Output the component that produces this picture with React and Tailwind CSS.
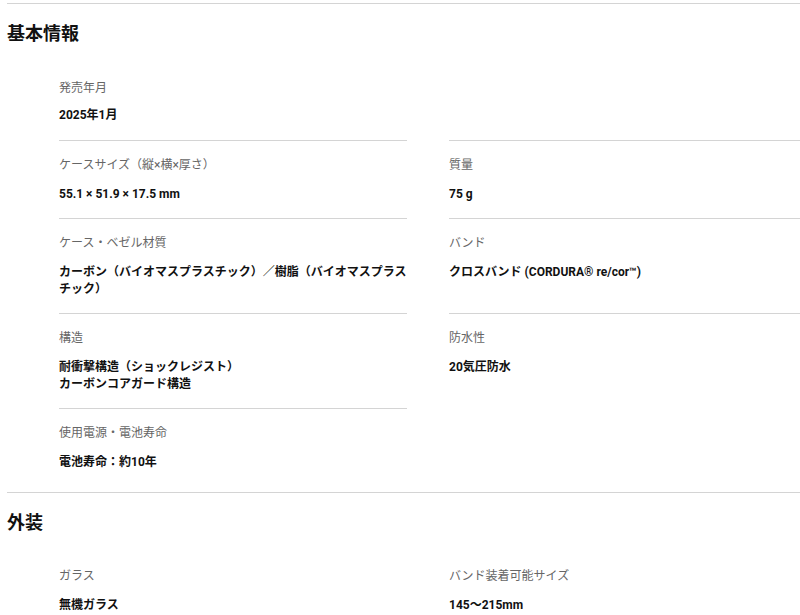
const basic = {
  first: { label: '発売年月', value: ['2025年1月'] },
  items: [
    { label: 'ケースサイズ（縦×横×厚さ）', value: ['55.1 × 51.9 × 17.5 mm'] },
    { label: '質量', value: ['75 g'] },
    { label: 'ケース・ベゼル材質', value: ['カーボン（バイオマスプラスチック）／樹脂（バイオマスプラスチック）'] },
    { label: 'バンド', value: ['クロスバンド (CORDURA® re/cor™)'] },
    { label: '構造', value: ['耐衝撃構造（ショックレジスト）', 'カーボンコアガード構造'] },
    { label: '防水性', value: ['20気圧防水'] },
    { label: '使用電源・電池寿命', value: ['電池寿命：約10年'] },
  ],
}

function Spec({ label, value, border = true, first = false }) {
  return (
    <div className={`${border ? 'border-t border-[#d4d4d4]' : ''} pt-[16px] ${first ? 'pb-[16px]' : 'pb-[15px]'}`}>
      <div className="text-[12px] leading-[17px] text-[#666]">{label}</div>
      <div className={`${first ? 'mt-[10px]' : 'mt-[12px]'} text-[12px] leading-[17px] font-bold text-[#111]`}>
        {value.map((v) => (
          <div key={v}>{v}</div>
        ))}
      </div>
    </div>
  )
}

export default function App() {
  return (
    <div className="w-[800px] h-[615px] overflow-hidden bg-white pl-[7px] pt-[3px] font-['Roboto','Noto_Sans_CJK_JP',sans-serif]">
      <section className="border-t border-[#d4d4d4]">
        <h2 className="pt-[16px] text-[18px] leading-[24px] font-bold text-[#111] font-['Noto_Sans_CJK_JP',sans-serif]">基本情報</h2>
        <div className="pl-[52px] pt-[20px]">
          <div className="w-[348px]">
            <Spec label={basic.first.label} value={basic.first.value} border={false} first />
          </div>
          <div className="grid grid-cols-[348px_1fr] gap-x-[42px] pb-[6px]">
            {basic.items.map((it) => (
              <Spec key={it.label} label={it.label} value={it.value} />
            ))}
          </div>
        </div>
      </section>
      <section className="border-t border-[#d4d4d4]">
        <h2 className="pt-[16px] text-[18px] leading-[24px] font-bold text-[#111] font-['Noto_Sans_CJK_JP',sans-serif]">外装</h2>
        <div className="pl-[52px] pt-[19px] grid grid-cols-[348px_1fr] gap-x-[42px]">
          <Spec label="ガラス" value={['無機ガラス']} border={false} />
          <Spec label="バンド装着可能サイズ" value={['145〜215mm']} border={false} />
        </div>
      </section>
    </div>
  )
}
